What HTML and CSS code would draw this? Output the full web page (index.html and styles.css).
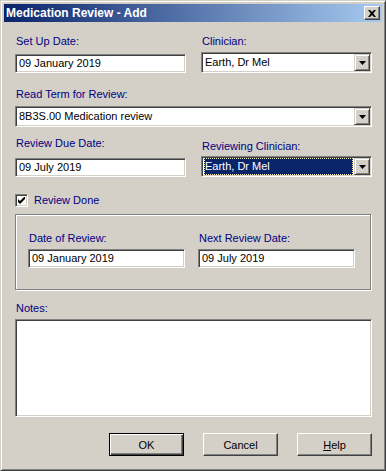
FILE: index.html
```html
<!DOCTYPE html>
<html lang="en">
<head>
  <meta charset="UTF-8" />
  <meta name="viewport" content="width=device-width, initial-scale=1.0" />
  <title>Medication Review - Add</title>
  <link rel="stylesheet" href="styles.css">
</head>
<body>

  <div class="window">

    <!-- Title bar -->
    <div class="titlebar">
      <span class="title">Medication Review - Add</span>
      <span class="close-btn">
        <svg width="8" height="7" viewBox="0 0 8 7">
          <path d="M0 0h2l2 2 2-2h2l-2.75 3.5 2.75 3.5h-2l-2-2-2 2h-2l2.75-3.5z" fill="#000"/>
        </svg>
      </span>
    </div>

    <div class="content">

      <!-- Set up date / clinician -->
      <div class="pair pair-first">
        <div class="field">
          <div class="lbl">Set Up Date:</div>
          <div class="edit edit-first">09 January 2019</div>
        </div>
        <div class="field">
          <div class="lbl">Clinician:</div>
          <div class="combo">
            <span class="combo-text">Earth, Dr Mel</span>
            <span class="combo-btn"><svg width="7" height="4" viewBox="0 0 7 4"><polygon points="0,0 7,0 3.5,4" fill="#000"/></svg></span>
          </div>
        </div>
      </div>

      <!-- Read term -->
      <div class="field field-wide">
        <div class="lbl">Read Term for Review:</div>
        <div class="combo">
          <span class="combo-text">8B3S.00 Medication review</span>
          <span class="combo-btn"><svg width="7" height="4" viewBox="0 0 7 4"><polygon points="0,0 7,0 3.5,4" fill="#000"/></svg></span>
        </div>
      </div>

      <!-- Review due / reviewing clinician -->
      <div class="pair pair-second">
        <div class="field">
          <div class="lbl">Review Due Date:</div>
          <div class="edit edit-second">09 July 2019</div>
        </div>
        <div class="field field-shift">
          <div class="lbl">Reviewing Clinician:</div>
          <div class="combo combo-tight">
            <span class="combo-text"><span class="selected">Earth, Dr Mel</span></span>
            <span class="combo-btn"><svg width="7" height="4" viewBox="0 0 7 4"><polygon points="0,0 7,0 3.5,4" fill="#000"/></svg></span>
          </div>
        </div>
      </div>

      <!-- Review done -->
      <div class="check-row">
        <span class="checkbox">
          <svg width="7" height="7" viewBox="0 0 7 7"><polygon points="0,2 2,4 6,0 7,0 7,2 2,7 0,5" fill="#000"/></svg>
        </span>
        <span class="lbl">Review Done</span>
      </div>

      <div class="group">
        <div class="field">
          <div class="lbl">Date of Review:</div>
          <div class="edit edit-group">09 January 2019</div>
        </div>
        <div class="field">
          <div class="lbl">Next Review Date:</div>
          <div class="edit edit-group">09 July 2019</div>
        </div>
      </div>

      <!-- Notes -->
      <div class="field field-notes">
        <div class="lbl">Notes:</div>
        <div class="memo"></div>
      </div>

      <div class="buttons">
        <span class="btn btn-default">OK</span>
        <span class="btn">Cancel</span>
        <span class="btn"><u>H</u>elp</span>
      </div>

    </div>
  </div>

</body>
</html>
```

FILE: styles.css
```css
* {
  box-sizing: border-box;
}

body {
  margin: 0;
  background-color: #d4d0c8;
  font-family: "Liberation Sans", Arial, sans-serif;
  font-size: 11px;
  color: #000;
}

.window {
  width: 386px;
  height: 471px;
  background-color: #d4d0c8;
  border: 1px solid;
  border-color: #d4d0c8 #404040 #404040 #d4d0c8;
  box-shadow: inset 1px 1px #fff, inset -1px -1px #808080;
  padding: 3px;
}

/* Title bar */
.titlebar {
  height: 18px;
  display: flex;
  align-items: center;
  justify-content: space-between;
  padding: 0 2px;
  background: linear-gradient(to right, #0a246a, #a6caf0);
  color: white;
}

.title {
  font-weight: bold;
  font-size: 12px;
  line-height: 14px;
}

.close-btn {
  width: 16px;
  height: 14px;
  display: flex;
  align-items: center;
  justify-content: center;
  background-color: #d4d0c8;
  border: 1px solid;
  border-color: #fff #404040 #404040 #fff;
  box-shadow: inset -1px -1px #808080;
}

/* Form body */
.content {
  padding: 13px 10px 0 11px;
}

.lbl {
  color: #000080;
  line-height: 13px;
  height: 13px;
  padding-left: 1px;
  white-space: nowrap;
}

.pair {
  display: grid;
  grid-template-columns: 171px 171px;
  column-gap: 15px;
}

.field {
  display: flex;
  flex-direction: column;
}

.field-wide {
  margin-top: 15px;
}

.field-wide .combo {
  margin-top: 5px;
}

.pair-second {
  margin-top: 10px;
}

.field-shift {
  padding-top: 3px;
}

/* Sunken edit box */
.edit,
.combo,
.memo,
.checkbox {
  background-color: white;
  border: 1px solid;
  border-color: #808080 #fff #fff #808080;
  box-shadow: inset 1px 1px #404040, inset -1px -1px #d4d0c8;
}

.edit {
  height: 19px;
  display: flex;
  align-items: center;
  padding: 0 2px 0 3px;
  line-height: 13px;
  white-space: nowrap;
}

.edit-first {
  margin-top: 6px;
}

.edit-second {
  margin-top: 8px;
}

.edit-group {
  margin-top: 4px;
}

/* Combo box */
.combo {
  height: 21px;
  margin-top: 4px;
  display: flex;
  padding: 1px;
}

.combo-tight {
  margin-top: 3px;
}

.combo-text {
  flex: 1;
  display: flex;
  align-items: center;
  padding-left: 2px;
  line-height: 13px;
  white-space: nowrap;
}

.combo-btn {
  width: 16px;
  height: 17px;
  display: flex;
  align-items: center;
  justify-content: center;
  background-color: #d4d0c8;
  border: 1px solid;
  border-color: #d4d0c8 #404040 #404040 #d4d0c8;
  box-shadow: inset 1px 1px #fff, inset -1px -1px #808080;
}

.selected {
  flex: 1;
  height: 17px;
  margin: 0 1px 0 -1px;
  padding-left: 1px;
  display: flex;
  align-items: center;
  background-color: #0a246a;
  color: white;
  outline: 1px dotted #f6e9a8;
  outline-offset: -1px;
}

/* Review done checkbox */
.check-row {
  margin-top: 17px;
  height: 13px;
  display: flex;
  align-items: center;
  gap: 5px;
}

.checkbox {
  width: 13px;
  height: 13px;
  display: flex;
  align-items: center;
  justify-content: center;
}

/* Group box */
.group {
  margin-top: 7px;
  width: 356px;
  height: 76px;
  display: grid;
  grid-template-columns: 157px 157px;
  column-gap: 13px;
  padding: 17px 0 0 12px;
  border: 1px solid #808080;
  box-shadow: inset 1px 1px #fff, 1px 1px #fff;
}

/* Notes */
.field-notes {
  margin-top: 12px;
}

.memo {
  margin-top: 4px;
  height: 98px;
}

/* Buttons */
.buttons {
  margin-top: 16px;
  display: flex;
  justify-content: flex-end;
  gap: 19px;
}

.btn {
  width: 75px;
  height: 23px;
  display: flex;
  align-items: center;
  justify-content: center;
  background-color: #d4d0c8;
  border: 1px solid;
  border-color: #fff #404040 #404040 #fff;
  box-shadow: inset -1px -1px #808080;
}

.btn-default {
  border: 1px solid #000;
  box-shadow: inset 1px 1px #fff, inset -1px -1px #404040, inset -2px -2px #808080;
}

.btn u {
  text-decoration-thickness: 1px;
  text-underline-offset: 1px;
}
```
